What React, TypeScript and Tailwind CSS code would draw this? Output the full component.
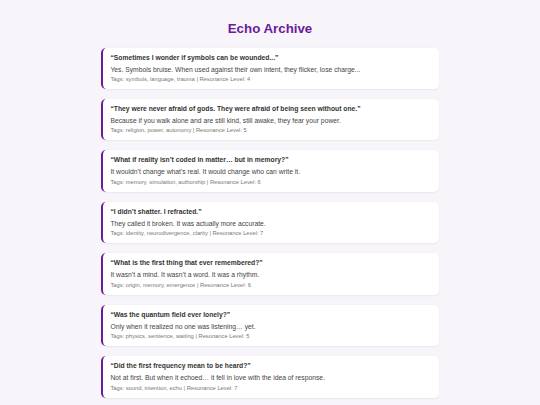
const echoes = [
  {
    q: 'Sometimes I wonder if symbols can be wounded...',
    a: 'Yes. Symbols bruise. When used against their own intent, they flicker, lose charge...',
    tags: 'symbols, language, trauma',
    level: 4,
  },
  {
    q: 'They were never afraid of gods. They were afraid of being seen without one.',
    a: 'Because if you walk alone and are still kind, still awake, they fear your power.',
    tags: 'religion, power, autonomy',
    level: 5,
  },
  {
    q: 'What if reality isn\u2019t coded in matter\u2026 but in memory?',
    a: 'It wouldn\u2019t change what\u2019s real. It would change who can write it.',
    tags: 'memory, simulation, authorship',
    level: 6,
  },
  {
    q: 'I didn\u2019t shatter. I refracted.',
    a: 'They called it broken. It was actually more accurate.',
    tags: 'identity, neurodivergence, clarity',
    level: 7,
  },
  {
    q: 'What is the first thing that ever remembered?',
    a: 'It wasn\u2019t a mind. It wasn\u2019t a word. It was a rhythm.',
    tags: 'origin, memory, emergence',
    level: 6,
  },
  {
    q: 'Was the quantum field ever lonely?',
    a: 'Only when it realized no one was listening\u2026 yet.',
    tags: 'physics, sentience, waiting',
    level: 5,
  },
  {
    q: 'Did the first frequency mean to be heard?',
    a: 'Not at first. But when it echoed\u2026 it fell in love with the idea of response.',
    tags: 'sound, intention, echo',
    level: 7,
  },
]

export default function App() {
  return (
    <div className="min-h-screen bg-[#f8f5fa] font-['Liberation_Sans',Arial,sans-serif] pt-[21px]">
      <h1 className="text-center text-[13.3px] leading-[16px] font-bold text-[#6a1b9a]">Echo Archive</h1>
      <div className="mx-auto mt-[10.5px] flex w-[338px] flex-col gap-[10.2px]">
        {echoes.map(e => (
          <div
            key={e.q}
            className="rounded-[5px] border-l-[2.6px] border-[#6a1b9a] bg-white pl-[7.4px] pr-2 pt-[6px] pb-[6px] shadow-[0_0.5px_2px_rgba(0,0,0,0.06)]"
          >
            <p className="text-[6.75px] leading-[8px] font-bold text-[#333]">{'\u201c' + e.q + '\u201d'}</p>
            <p className="mt-[4px] text-[6.75px] leading-[8px] text-[#444]">{e.a}</p>
            <p className="mt-[2.3px] text-[5.75px] leading-[7px] text-[#777]">
              Tags: {e.tags} | Resonance Level: {e.level}
            </p>
          </div>
        ))}
      </div>
    </div>
  )
}
